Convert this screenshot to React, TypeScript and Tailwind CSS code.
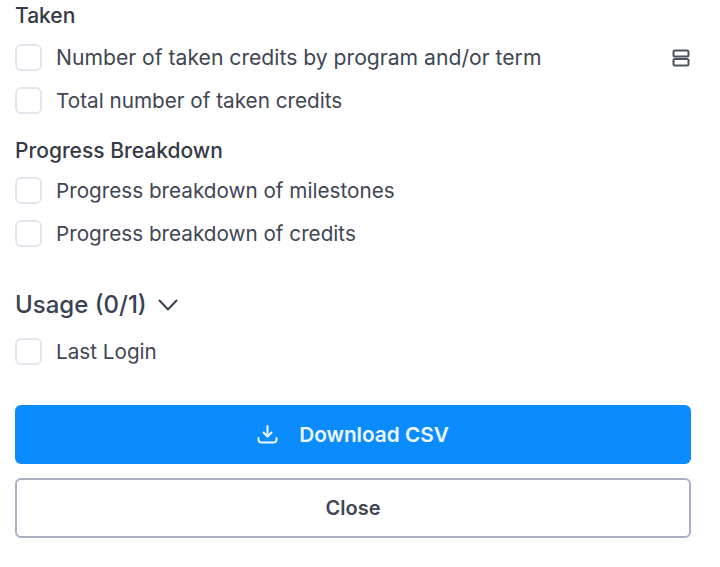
function Row({ label, icon }: { label: string; icon?: boolean }) {
  return (
    <div className="flex h-[43px] items-center">
      <span className="h-[27px] w-[27px] shrink-0 rounded-[6px] border-2 border-[#e2e6ed] bg-white" />
      <span className={icon ? "ml-[14px] text-[21.15px] leading-[30px] text-[#3f4654]" : "ml-[14px] text-[20.7px] leading-[30px] text-[#3f4654]"}>{label}</span>
      {icon && (
        <svg className="ml-auto mr-[1px] h-[18px] w-[18px] text-[#4b5261]" viewBox="0 0 18 18" fill="none" stroke="currentColor" strokeWidth="2">
          <rect x="1.5" y="1.5" width="15" height="6" rx="1.5" />
          <rect x="1.5" y="10" width="15" height="6.5" rx="1.5" />
        </svg>
      )}
    </div>
  )
}

export default function App() {
  return (
    <div className="h-[567px] w-[720px] overflow-hidden bg-white pl-[15px] pr-[29px] font-['Inter',sans-serif]">
      <div className="flex h-[36px] items-end text-[21px] font-medium leading-[30px] text-[#343a46]">
        <span className="pb-[5px]">Taken</span>
      </div>
      <Row label="Number of taken credits by program and/or term" icon />
      <Row label="Total number of taken credits" />
      <div className="mt-[14px] flex h-[30px] items-center text-[21px] font-medium leading-[30px] text-[#343a46]">
        Progress Breakdown
      </div>
      <div className="mt-[3px]">
        <Row label="Progress breakdown of milestones" />
        <Row label="Progress breakdown of credits" />
      </div>
      <div className="mt-[32px] flex h-[36px] items-center gap-[11px] text-[24px] font-medium text-[#3a4150]">
        Usage (0/1)
        <svg className="h-[12px] w-[20px]" viewBox="0 0 20 12" fill="none" stroke="currentColor" strokeWidth="2" strokeLinecap="round" strokeLinejoin="round">
          <path d="M1.5 1.5L10 10.5L18.5 1.5" />
        </svg>
      </div>
      <div className="mt-[7px]">
        <Row label="Last Login" />
      </div>
      <button className="mt-[32px] flex h-[59px] w-full items-center justify-center gap-[21px] rounded-[6px] bg-[#0a8cff] text-[20.75px] font-semibold text-[#eef7ff]">
        <svg className="h-[19px] w-[21px]" viewBox="0 0 21 19" fill="none" stroke="currentColor" strokeWidth="2" strokeLinecap="round" strokeLinejoin="round">
          <path d="M10.5 1v10" />
          <path d="M6.5 7.5l4 4 4-4" />
          <path d="M1.5 13v1.5a3 3 0 0 0 3 3h12a3 3 0 0 0 3-3V13" />
        </svg>
        Download CSV
      </button>
      <button className="mt-[14px] flex h-[60px] w-full items-center justify-center rounded-[6px] border-2 border-[#a9afc4] bg-white text-[20px] font-semibold text-[#3f4654]">
        Close
      </button>
    </div>
  )
}
